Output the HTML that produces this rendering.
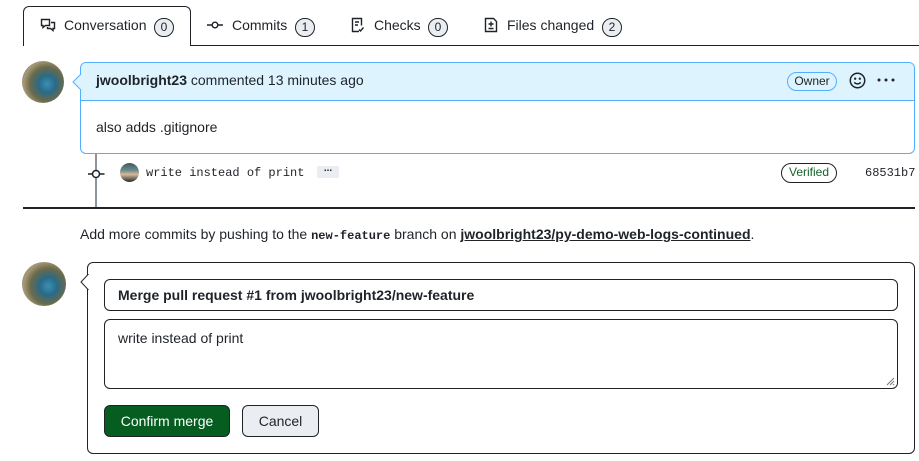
<!DOCTYPE html>
<html><head><meta charset="utf-8"><style>
*{box-sizing:border-box;margin:0;padding:0}
body{width:919px;height:461px;background:#fff;font-family:"Liberation Sans",sans-serif;font-size:14px;color:#1f2328;position:relative;overflow:hidden}
.a{position:absolute}
.cnt{position:absolute;width:20px;height:19px;border:1px solid #1f2328;border-radius:10px;background:#eaeef2;font-size:12px;text-align:center;line-height:17px}
.av{position:absolute;border-radius:50%;background:radial-gradient(circle at 60% 55%,#3a8fb8 0,#2a6a86 25%,#6b6a4a 50%,#a89a78 70%,#3b3628 100%)}
.mono{font-family:"Liberation Mono",monospace}
</style></head><body>
<div class="a" style="left:23px;top:6px;width:168px;height:40px;border:1px solid #1f2328;border-bottom:none;border-radius:6px 6px 0 0;background:#fff;z-index:2"></div>
<div class="a" style="left:190px;top:45px;width:729px;height:1px;background:#1f2328"></div>
<svg class="a" style="left:40px;top:17px;z-index:3" width="16" height="16" viewBox="0 0 16 16" fill="none" stroke="#1f2328" stroke-width="1.4"><path d="M1.5 2.5h8v6h-4l-2.5 2v-2h-1.5z"/><path d="M11 5.5h3.5v6h-1.5v2l-2.5-2h-3v-1.5"/></svg>
<div class="a" style="left:64px;top:17px;z-index:3">Conversation</div>
<div class="cnt" style="left:154px;top:18px;z-index:3">0</div>
<svg class="a" style="left:207px;top:17px" width="16" height="16" viewBox="0 0 16 16" fill="none" stroke="#1f2328" stroke-width="1.4"><circle cx="8" cy="8" r="2.8"/><path d="M0 8h5M11 8h5"/></svg>
<div class="a" style="left:232px;top:17px">Commits</div>
<div class="cnt" style="left:295px;top:18px">1</div>
<svg class="a" style="left:350px;top:17px" width="16" height="16" viewBox="0 0 16 16" fill="none" stroke="#1f2328" stroke-width="1.4"><path d="M9 14.5H2.5v-13h9v7"/><path d="M5 5h4M5 8h3"/><path d="M9 12.5l1.5 1.5 3-3.5"/></svg>
<div class="a" style="left:374px;top:17px">Checks</div>
<div class="cnt" style="left:428px;top:18px">0</div>
<svg class="a" style="left:483px;top:17px" width="16" height="16" viewBox="0 0 16 16" fill="none" stroke="#1f2328" stroke-width="1.4"><path d="M2.5 1.5h8l3 3v10h-11z"/><path d="M8 4.5v5M5.5 7h5M5.5 11.5h5"/></svg>
<div class="a" style="left:507px;top:17px">Files changed</div>
<div class="cnt" style="left:602px;top:18px">2</div>

<div class="av" style="left:22px;top:61px;width:42px;height:42px"></div>
<div class="a" style="left:80px;top:62px;width:835px;height:92px;border:1px solid #54aeff;border-radius:6px;overflow:hidden">
<div style="height:38px;background:#ddf4ff;border-bottom:1px solid #54aeff"></div></div>
<svg class="a" style="left:72px;top:74px" width="10" height="16"><path d="M9 0L1 8l8 8" fill="#ddf4ff" stroke="#54aeff"/></svg>
<div class="a" style="left:96px;top:72px"><b>jwoolbright23</b> commented 13 minutes ago</div>
<div class="a" style="left:787px;top:72px;width:50px;height:19px;border:1px solid #54aeff;border-radius:10px;font-size:12px;text-align:center;line-height:17px">Owner</div>
<svg class="a" style="left:849px;top:72px" width="17" height="17" viewBox="0 0 16 16" fill="none" stroke="#1f2328" stroke-width="1.4"><circle cx="8" cy="8" r="6.8"/><circle cx="5.8" cy="6.3" r=".4" fill="#1f2328"/><circle cx="10.2" cy="6.3" r=".4" fill="#1f2328"/><path d="M5 9.7c1.6 2 4.4 2 6 0"/></svg>
<svg class="a" style="left:877px;top:78px" width="18" height="4"><circle cx="2" cy="2" r="1.5" fill="#1f2328"/><circle cx="9" cy="2" r="1.5" fill="#1f2328"/><circle cx="16" cy="2" r="1.5" fill="#1f2328"/></svg>
<div class="a" style="left:96px;top:119px">also adds .gitignore</div>

<div class="a" style="left:95px;top:154px;width:2px;height:53px;background:#8c959f"></div>
<svg class="a" style="left:87px;top:166px" width="18" height="16"><circle cx="9" cy="8" r="3.5" fill="#fff" stroke="#1f2328" stroke-width="1.5"/><path d="M1 8h4.5M12.5 8h5" stroke="#1f2328" stroke-width="1.5"/></svg>
<div class="a" style="left:120px;top:163px;width:19px;height:19px;border-radius:50%;background:linear-gradient(#3f5a5c 0,#6d8e8e 40%,#d9b99a 60%,#1f2a2a 100%)"></div>
<div class="a mono" style="left:146px;top:166px;font-size:12px">write instead of print</div>
<div class="a" style="left:317px;top:166px;width:22px;height:12px;background:#eaeef2;border-radius:2px;font-size:10px;text-align:center;line-height:6px;font-weight:bold">...</div>
<div class="a" style="left:781px;top:163px;width:56px;height:20px;border:1px solid #1f2328;border-radius:10px;font-size:12px;text-align:center;line-height:17px;color:#116329">Verified</div>
<div class="a mono" style="left:865px;top:166px;font-size:12px">68531b7</div>

<div class="a" style="left:23px;top:207px;width:892px;height:2px;background:#1f2328"></div>
<div class="a" style="left:80px;top:226px">Add more commits by pushing to the <b class="mono" style="font-size:12px">new-feature</b> branch on <b style="text-decoration:underline">jwoolbright23/py-demo-web-logs-continued</b>.</div>

<div class="av" style="left:22px;top:262px;width:44px;height:44px"></div>
<div class="a" style="left:87px;top:262px;width:828px;height:192px;border:1px solid #1f2328;border-radius:6px"></div>
<svg class="a" style="left:80px;top:274px" width="9" height="16"><path d="M8.5 0L1 8l7.5 8" fill="#fff" stroke="#1f2328"/></svg>
<div class="a" style="left:104px;top:279px;width:794px;height:32px;border:1px solid #1f2328;border-radius:6px;padding:7px 0 0 13px;font-weight:bold">Merge pull request #1 from jwoolbright23/new-feature</div>
<div class="a" style="left:104px;top:319px;width:794px;height:70px;border:1px solid #1f2328;border-radius:6px;padding:10px 0 0 13px">write instead of print</div>
<svg class="a" style="left:886px;top:377px" width="9" height="9"><path d="M8 1L1 8M8 4L4 8M8 7L7 8" stroke="#777"/></svg>
<div class="a" style="left:104px;top:405px;width:126px;height:32px;background:#055d20;border:1px solid #1f2328;border-radius:6px;color:#fff;text-align:center;line-height:30px">Confirm merge</div>
<div class="a" style="left:242px;top:405px;width:77px;height:32px;background:#eaeef2;border:1px solid #1f2328;border-radius:6px;text-align:center;line-height:30px">Cancel</div>
</body></html>
